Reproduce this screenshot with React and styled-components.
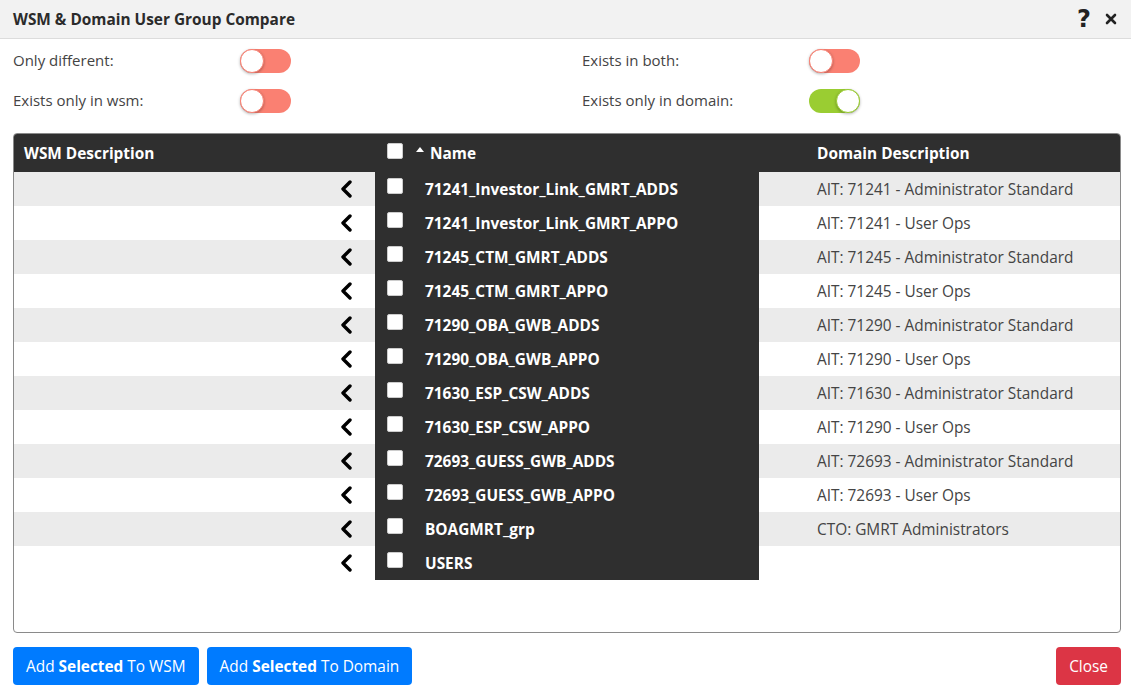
import React, { useState } from 'react'
import styled, { createGlobalStyle } from 'styled-components'

const GlobalStyle = createGlobalStyle`
  html, body {
    margin: 0;
    padding: 0;
    background: #fff;
  }
  body {
    font-family: "Open Sans", "Noto Sans", sans-serif;
    color: #333;
  }
  * { box-sizing: border-box; }
`

const rows = [
  { name: '71241_Investor_Link_GMRT_ADDS', domain: 'AIT: 71241 - Administrator Standard' },
  { name: '71241_Investor_Link_GMRT_APPO', domain: 'AIT: 71241 - User Ops' },
  { name: '71245_CTM_GMRT_ADDS', domain: 'AIT: 71245 - Administrator Standard' },
  { name: '71245_CTM_GMRT_APPO', domain: 'AIT: 71245 - User Ops' },
  { name: '71290_OBA_GWB_ADDS', domain: 'AIT: 71290 - Administrator Standard' },
  { name: '71290_OBA_GWB_APPO', domain: 'AIT: 71290 - User Ops' },
  { name: '71630_ESP_CSW_ADDS', domain: 'AIT: 71630 - Administrator Standard' },
  { name: '71630_ESP_CSW_APPO', domain: 'AIT: 71290 - User Ops' },
  { name: '72693_GUESS_GWB_ADDS', domain: 'AIT: 72693 - Administrator Standard' },
  { name: '72693_GUESS_GWB_APPO', domain: 'AIT: 72693 - User Ops' },
  { name: 'BOAGMRT_grp', domain: 'CTO: GMRT Administrators' },
  { name: 'USERS', domain: '' },
]

function Chevron() {
  return (
    <svg width="14" height="18" viewBox="0 0 14 18">
      <polyline points="11,2 4,9 11,16" fill="none" stroke="#000" strokeWidth="3.4" strokeLinecap="round" strokeLinejoin="round" />
    </svg>
  )
}

function SortCaret() {
  return (
    <svg width="8" height="5" viewBox="0 0 8 5">
      <polygon points="0,5 4,0 8,5" fill="#fff" />
    </svg>
  )
}

function App() {
  const [flags, setFlags] = useState({ diff: false, both: false, wsm: false, domain: true })
  const flip = (k) => setFlags({ ...flags, [k]: !flags[k] })

  return (
    <>
      <GlobalStyle />
      <Dialog>
        <Header>
          <Title>WSM &amp; Domain User Group Compare</Title>
          <HeaderIcons>
            <Help>?</Help>
            <svg width="12" height="12" viewBox="0 0 12 12">
              <path d="M2 2 L10 10 M10 2 L2 10" stroke="#222" strokeWidth="2.6" strokeLinecap="round" />
            </svg>
          </HeaderIcons>
        </Header>

        <Filters>
          <Filter>
            <Label>Only different:</Label>
            <Toggle on={flags.diff} onClick={() => flip('diff')}><Knob on={flags.diff} /></Toggle>
          </Filter>
          <Filter>
            <Label>Exists in both:</Label>
            <Toggle on={flags.both} onClick={() => flip('both')}><Knob on={flags.both} /></Toggle>
          </Filter>
          <Filter>
            <Label>Exists only in wsm:</Label>
            <Toggle on={flags.wsm} onClick={() => flip('wsm')}><Knob on={flags.wsm} /></Toggle>
          </Filter>
          <Filter>
            <Label>Exists only in domain:</Label>
            <Toggle on={flags.domain} onClick={() => flip('domain')}><Knob on={flags.domain} /></Toggle>
          </Filter>
        </Filters>

        <TableBox>
          <HeadRow>
            <HeadCell>WSM Description</HeadCell>
            <NameHead>
              <Check />
              <Caret><SortCaret /></Caret>
              Name
            </NameHead>
            <HeadCell pad="58px">Domain Description</HeadCell>
          </HeadRow>
          {rows.map((r, i) => (
            <Row key={r.name} odd={i % 2 === 0}>
              <WsmCell><Chevron /></WsmCell>
              <NameCell>
                <Check />
                {r.name}
              </NameCell>
              <DomainCell>{r.domain}</DomainCell>
            </Row>
          ))}
        </TableBox>

        <Footer>
          <Actions>
            <Button>Add <b>Selected</b> To WSM</Button>
            <Button>Add <b>Selected</b> To Domain</Button>
          </Actions>
          <Button danger>Close</Button>
        </Footer>
      </Dialog>
    </>
  )
}

const Dialog = styled.div`
  width: 1131px;
  height: 691px;
  display: flex;
  flex-direction: column;
`

const Header = styled.div`
  height: 39px;
  background: #f2f2f2;
  border-bottom: 1px solid #dcdcdc;
  display: flex;
  align-items: center;
  justify-content: space-between;
  padding: 0 14px 0 13px;
`

const Title = styled.div`
  font-size: 15.4px;
  font-weight: 700;
  color: #2b2b2b;
`

const HeaderIcons = styled.div`
  display: flex;
  align-items: center;
  gap: 14px;
`

const Help = styled.span`
  font-size: 24px;
  font-weight: 800;
  color: #222;
  line-height: 1;
  font-family: "DejaVu Sans", sans-serif;
`

const Filters = styled.div`
  display: grid;
  grid-template-columns: 569px 1fr;
  row-gap: 16px;
  padding: 10px 13px 0 13px;
`

const Filter = styled.div`
  display: flex;
  align-items: center;
  height: 24px;
`

const Label = styled.span`
  width: 227px;
  font-size: 15px;
  color: #444;
  margin-top: -2px;
`

const Toggle = styled.div`
  width: 51px;
  height: 24px;
  border-radius: 12px;
  background: ${(p) => (p.on ? '#9acd32' : '#fa8072')};
  display: flex;
  align-items: center;
  justify-content: ${(p) => (p.on ? 'flex-end' : 'flex-start')};
  cursor: pointer;
`

const Knob = styled.div`
  width: 24px;
  height: 24px;
  border-radius: 50%;
  background: #fff;
  border: 1px solid ${(p) => (p.on ? '#9acd32' : '#fa8072')};
  box-shadow: 0 1px 3px rgba(0, 0, 0, 0.3);
`

const TableBox = styled.div`
  margin: 20px 10px 0 13px;
  height: 500px;
  border: 1px solid #8a8a8a;
  border-radius: 4px;
  overflow: hidden;
  background: #fff;
`

const Grid = styled.div`
  display: grid;
  grid-template-columns: 361px 384px 1fr;
`

const HeadRow = styled(Grid)`
  height: 38px;
  background: #2f2f2f;
  color: #fff;
  font-weight: 700;
  font-size: 15.4px;
`

const HeadCell = styled.div`
  display: flex;
  align-items: center;
  padding-left: ${(p) => p.pad || '10px'};
`

const NameHead = styled.div`
  display: flex;
  align-items: center;
  padding-left: 12px;

  & > span:first-child {
    margin-right: 13px;
    margin-top: -4px;
  }
`

const Caret = styled.span`
  display: flex;
  margin: 0 6px 7px 0;
`

const Check = styled.span`
  width: 16px;
  height: 16px;
  background: #fff;
  border: 1px solid #ccc;
  border-radius: 2px;
  margin-right: 22px;
  flex-shrink: 0;
  margin-top: -6px;
`

const Row = styled(Grid)`
  height: 34px;
  background: ${(p) => (p.odd ? '#ebebeb' : '#fff')};
`

const WsmCell = styled.div`
  display: flex;
  align-items: center;
  justify-content: flex-end;
  padding-right: 22px;
`

const NameCell = styled.div`
  background: #2f2f2f;
  color: #fff;
  font-weight: 700;
  font-size: 15.4px;
  display: flex;
  align-items: center;
  padding-left: 12px;
`

const DomainCell = styled.div`
  display: flex;
  align-items: center;
  padding-left: 58px;
  font-size: 15.4px;
  color: #444;
`

const Footer = styled.div`
  display: flex;
  justify-content: space-between;
  padding: 14px 10px 0 13px;
`

const Actions = styled.div`
  display: flex;
  gap: 8px;
`

const Button = styled.button`
  height: 38px;
  padding: 0 13px;
  border: none;
  border-radius: 4px;
  background: ${(p) => (p.danger ? '#dc3545' : '#007bff')};
  color: #fff;
  font-family: "Open Sans", sans-serif;
  font-size: 15.4px;
  cursor: pointer;

  b { font-weight: 700; }
`

export default App
